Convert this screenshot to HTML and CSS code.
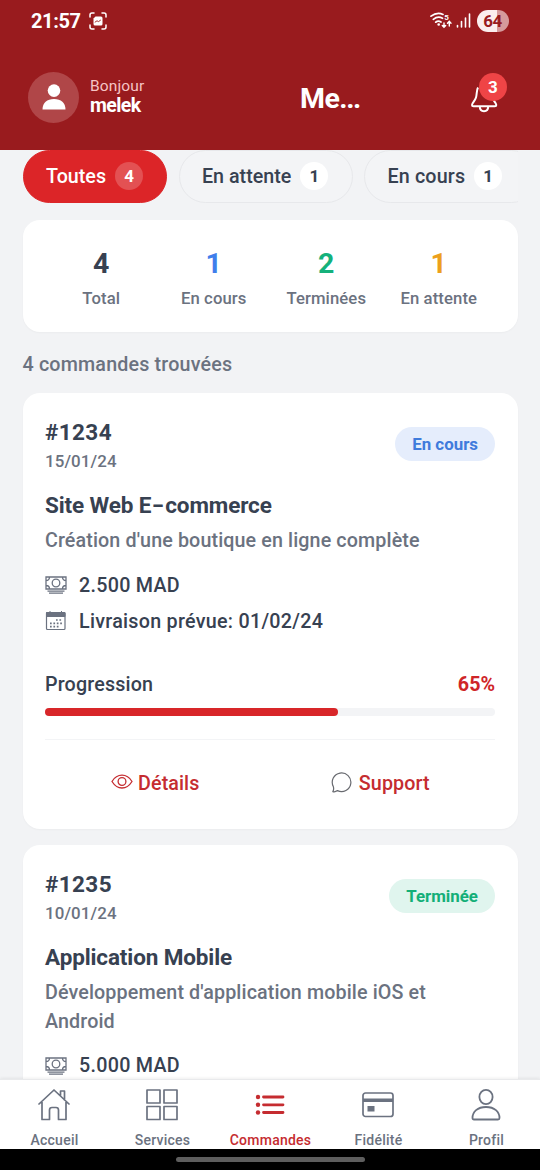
FILE: index.html
```html
<!DOCTYPE html>
<html lang="fr">
<head>
<meta charset="utf-8">
<title>Mes commandes</title>
<link rel="stylesheet" href="styles.css">
</head>
<body>
<svg class="defs" width="0" height="0">
  <symbol id="cash" viewBox="0 0 22 18">
    <path d="M1 1h20v12H1zM4.5 1c0 2-1.4 3.5-3.5 3.5M17.500 1c0 2 1.400 3.500 3.500 3.500M1 9.500c2.100 0 3.500 1.500 3.500 3.500M21 9.500c-2.100 0-3.500 1.500-3.500 3.500M2.500 15.200h17M4 17.200h14" fill="none" stroke="currentColor" stroke-width="1.300"/>
    <circle cx="11" cy="7" r="3.800" fill="none" stroke="currentColor" stroke-width="1.300"/>
  </symbol>
</svg>
<div class="screen">
  <header class="header">
    <div class="status">
      <span class="clock">21:57</span>
      <svg class="capture" width="18" height="18" viewBox="0 0 18 18"><path d="M1 5V3a2 2 0 0 1 2-2h2M13 1h2a2 2 0 0 1 2 2v2M17 13v2a2 2 0 0 1-2 2h-2M5 17H3a2 2 0 0 1-2-2v-2" fill="none" stroke="#fff" stroke-width="1.500" stroke-linecap="round"/><path d="M6.500 4.500H12A1.500 1.500 0 0 1 13.500 6v6a1.500 1.500 0 0 1-1.500 1.500H6A1.500 1.500 0 0 1 4.500 12V6.500z" fill="#fff"/><path d="M5.800 10.300 8 8.800 9.500 9.600 11.800 8" fill="none" stroke="#991b1e" stroke-width=".9"/></svg>
      <svg class="wifi" width="22" height="17" viewBox="0 0 22 17"><g fill="none" stroke="#fff" stroke-width="1.700" stroke-linecap="round"><path d="M1 4.200Q7 -.4 13 2.400M3.300 7.300Q8 3.700 12.500 6.300M5.700 10.200Q8.200 8.300 11 10"/><path d="M14 11v4M12.300 13.500 14 15.300l1.700-1.800M19.300 14V9.500M17.500 11.200l1.800-1.900 1.700 1.900" stroke-width="1.400"/></g><circle cx="8.700" cy="12.500" r="1.300" fill="#fff"/><text x="14.300" y="7.500" fill="#fff" class="band">5</text></svg>
      <svg class="signal" width="15" height="15" viewBox="0 0 15 15"><path d="M1.500 12.500v1.500M5.500 8.500V14M9.500 5v9M13.500 1v13" stroke="#fff" stroke-width="1.600" stroke-linecap="round"/></svg>
      <span class="battery">64</span>
    </div>
    <div class="bar">
      <div class="avatar"><svg width="24" height="26" viewBox="0 0 24 26"><circle cx="12" cy="6.600" r="6.300" fill="#fff"/><path d="M.5 25.500c0-6.500 4.500-10.500 11.500-10.500s11.500 4 11.500 10.500z" fill="#fff"/></svg></div>
      <div class="hello"><span class="greet">Bonjour</span><span class="user">melek</span></div>
      <h1 class="title">Me<span class="dots">...</span></h1>
      <div class="bell"><svg width="28" height="30" viewBox="0 0 28 30"><path d="M8 4.500C6.500 7 7 11 6 14.500 5 18 2 20 2 22q0 1.300 1.500 1.300h21.300q1.500 0 1.500-1.300c0-2-3-4-4-7.500M9.800 23.500c0 2.800 1.600 4.700 4.200 4.700s4.200-1.900 4.200-4.700" fill="none" stroke="#fff" stroke-width="2"/></svg><span class="badge">3</span></div>
    </div>
  </header>

  <main class="content">
    <div class="filters">
      <div class="chip active"><span>Toutes</span><b>4</b></div>
      <div class="chip pending"><span>En attente</span><b>1</b></div>
      <div class="chip running"><span>En cours</span><b>1</b></div>
    </div>
    <section class="stats">
      <div class="stat"><strong>4</strong><span>Total</span></div>
      <div class="stat blue"><strong>1</strong><span>En cours</span></div>
      <div class="stat green"><strong>2</strong><span>Terminées</span></div>
      <div class="stat amber"><strong>1</strong><span>En attente</span></div>
    </section>
    <p class="found">4 commandes trouvées</p>

    <article class="card">
      <div class="top"><div><h2 class="num">#1234</h2><div class="date">15/01/24</div></div><span class="tag tag-blue">En cours</span></div>
      <h3 class="name">Site Web E<span class="dash">-</span>commerce</h3>
      <p class="desc">Création d'une boutique en ligne complète</p>
      <div class="row"><svg width="22" height="18"><use href="#cash"/></svg><span>2.500 MAD</span></div>
      <div class="row second"><svg width="22" height="20" viewBox="0 0 22 20"><rect x="1.500" y="1.500" width="18.500" height="17" rx="1" fill="none" stroke="currentColor" stroke-width="1.200"/><path d="M1.500 1.500h18.500v4H1.500zM5 0v2M16.500 0v2" fill="currentColor" stroke="currentColor"/><path d="M11 9h6.500M5 12.300h12.500M5 15.600h9.500" stroke="currentColor" stroke-width="1.700" stroke-dasharray="1.700 1.700"/></svg><span>Livraison prévue: 01/02/24</span></div>
      <div class="progress"><span>Progression</span><b>65%</b></div>
      <div class="track"><div class="fill" style="width:65%"></div></div>
      <div class="actions">
        <div class="action"><svg width="22" height="18" viewBox="0 0 22 18"><path d="M1 7.500C3.500 3.500 7 1.200 11 1.200s7.500 2.300 10 6.300C18.500 11.500 15 14 11 14S3.500 11.500 1 7.500z" fill="none" stroke="#c52c30" stroke-width="1.300"/><circle cx="11" cy="7.500" r="3.900" fill="none" stroke="#c52c30" stroke-width="1.300"/></svg><span>Détails</span></div>
        <div class="action support"><svg width="22" height="22" viewBox="0 0 22 22"><path d="M2.300 14.500A9.300 9.300 0 1 1 6.500 18.600C4.800 19.800 3 20 1.800 19.600 2.800 18.200 2.900 16.500 2.300 14.500z" fill="none" stroke="#686a70" stroke-width="1.200" stroke-linejoin="round"/></svg><span>Support</span></div>
      </div>
    </article>

    <article class="card">
      <div class="top"><div><h2 class="num">#1235</h2><div class="date">10/01/24</div></div><span class="tag tag-green">Terminée</span></div>
      <h3 class="name">Application Mobile</h3>
      <p class="desc">Développement d'application mobile iOS et Android</p>
      <div class="row"><svg width="22" height="18"><use href="#cash"/></svg><span>5.000 MAD</span></div>
    </article>
  </main>

  <nav class="tabs">
    <div class="tab"><svg width="32" height="34" viewBox="0 0 32 34"><path d="M1 16 16 2l15 14M4 14v17.500h7.500V22q0-2.500 2.500-2.500h4q2.500 0 2.500 2.500v9.500H28V14M22.500 7.500V3h4v9" fill="none" stroke="currentColor" stroke-width="1.700" stroke-linejoin="round" stroke-linecap="round"/></svg><span>Accueil</span></div>
    <div class="tab"><svg width="32" height="34" viewBox="0 0 32 34"><path d="M1 2h13v13H1zM18 2h13v13H18zM1 18.500h13v13H1zM18 18.500h13v13H18z" fill="none" stroke="currentColor" stroke-width="1.700" stroke-linejoin="round"/></svg><span>Services</span></div>
    <div class="tab current"><svg width="32" height="34" viewBox="0 0 32 34"><path d="M9.500 9H29M9.500 16.800H29M9.500 24.500H29" stroke="currentColor" stroke-width="2.800" stroke-linecap="round"/><g fill="currentColor"><circle cx="4" cy="9" r="2.200"/><circle cx="4" cy="16.800" r="2.200"/><circle cx="4" cy="24.500" r="2.200"/></g></svg><span>Commandes</span></div>
    <div class="tab"><svg width="32" height="34" viewBox="0 0 32 34"><rect x="1" y="5" width="30" height="23.500" rx="2.500" fill="none" stroke="currentColor" stroke-width="1.700"/><path d="M1 10.500h30v3.500H1zM5.500 18h7v5.500h-7z" fill="currentColor"/></svg><span>Fidélité</span></div>
    <div class="tab"><svg width="32" height="34" viewBox="0 0 32 34"><ellipse cx="16" cy="9" rx="6.600" ry="7.200" fill="none" stroke="currentColor" stroke-width="1.800"/><path d="M2.500 30c0-6.300 5-11 13.500-11s13.500 4.700 13.500 11q0 1.500-1.500 1.500H4Q2.500 31.500 2.500 30z" fill="none" stroke="currentColor" stroke-width="1.800"/></svg><span>Profil</span></div>
  </nav>
  <div class="gesture"><div class="handle"></div></div>
</div>
</body>
</html>
```

FILE: styles.css
```css
* { box-sizing: border-box; }
body, h1, h2, h3, p { margin: 0; }
body { font-family: Roboto, sans-serif; font-weight: 500; color: #374151; background: #f2f3f5; }
svg { display: block; flex: none; }
.defs { position: absolute; }
.screen { width: 540px; height: 1170px; display: flex; flex-direction: column; overflow: hidden; }

.header { height: 149.500px; flex: none; background: #991b1e; color: #fff; }
.status { height: 42px; display: flex; align-items: center; padding: 0 31.500px 1px 31px; }
.clock { font-size: 20px; font-weight: 700; width: 58px; letter-spacing: -.4px; }
.wifi { margin-left: auto; }
.band { font-size: 8px; font-weight: 700; }
.signal { margin-left: 4px; }
.battery { width: 32px; height: 22px; margin-left: 6px; border-radius: 11px; background: linear-gradient(90deg, #fbeeee 64%, #d69a9c 64%); color: #991b1e; font-size: 17px; font-weight: 700; line-height: 22px; text-align: center; letter-spacing: -.5px; }
.bar { height: 107px; display: flex; align-items: center; padding: 3px 28px 0; }
.avatar { width: 51px; height: 51px; border-radius: 50%; background: #b04648; display: flex; align-items: center; justify-content: center; }
.hello { display: flex; flex-direction: column; margin-left: 11px; width: 210px; margin-top: -3px; }
.greet { font-size: 15.500px; line-height: 20px; font-weight: 400; color: #f6c4c5; letter-spacing: .15px; }
.user { font-size: 19.500px; line-height: 20px; font-weight: 700; letter-spacing: -.6px; }
.title { font-size: 28.500px; line-height: 34px; font-weight: 700; margin-top: 4px; letter-spacing: -.5px; }
.dots { letter-spacing: -1.400px; }
.bell { position: relative; margin-left: auto; margin-right: 14px; margin-top: 1px; }
.badge { position: absolute; left: 9px; top: -10px; width: 28px; height: 28px; border-radius: 50%; background: #ef4446; font-size: 17px; font-weight: 700; line-height: 28px; text-align: center; }

.content { flex: 1; min-height: 0; overflow: hidden; padding: 0 22.500px; }
.filters { display: flex; gap: 11.500px; height: 53.500px; overflow: hidden; }
.chip { flex: none; height: 53px; border: 1.500px solid #e7e8eb; border-radius: 27px; padding: 0 22px 0 22.500px; display: flex; align-items: center; gap: 9px; font-size: 19.700px; background: #f3f4f6; white-space: nowrap; }
.chip span { padding-top: 1px; }
.chip b { flex: none; width: 28px; height: 28px; border-radius: 50%; background: #fff; font-size: 17px; line-height: 28px; text-align: center; font-weight: 700; letter-spacing: 0; }
.active { width: 144.500px; background: #dc2528; border-color: #dc2528; color: #fff; }
.active b { background: #e35153; }
.pending { width: 174px; }
.running { width: 174px; letter-spacing: .15px; }
.stats { height: 112px; margin-top: 17px; border-radius: 17px; background: #fff; box-shadow: 0 1px 2px #00000008; padding: 27px 22.500px 0; display: grid; grid-template-columns: repeat(4, 1fr); text-align: center; }
.stat strong { display: block; font-size: 28.500px; line-height: 34px; font-weight: 700; }
.stat span { display: block; margin-top: 6px; font-size: 16.700px; line-height: 24px; color: #6b7280; white-space: nowrap; letter-spacing: .1px; }
.blue strong { color: #3f7eeb; }
.green strong { color: #15b17b; }
.amber strong { color: #eda01c; }
.found { margin: 18.500px 0 14.500px; font-size: 19.700px; line-height: 28px; color: #6b7280; letter-spacing: .17px; }

.card { height: 436px; margin-bottom: 16px; padding: 23px 22.500px 0; background: #fff; border-radius: 17px; box-shadow: 0 1px 2px #00000008; }
.top { display: flex; justify-content: space-between; }
.num { font-size: 22.500px; line-height: 32px; font-weight: 700; letter-spacing: .4px; margin-top: -.5px; }
.date { font-size: 16.900px; line-height: 26px; color: #6b7280; margin-top: .5px; letter-spacing: .1px; }
.tag { margin-top: 11px; height: 34px; border-radius: 17px; padding: 0 17px; font-size: 16.900px; line-height: 34px; font-weight: 700; }
.tag-blue { background: #e5edfc; color: #3f7bdc; }
.tag-green { background: #e0f5ee; color: #13af78; }
.name { margin-top: 14.500px; font-size: 22.500px; line-height: 32px; font-weight: 700; letter-spacing: -.13px; }
.dash { display: inline-block; width: 14px; text-align: center; transform: scaleX(1.500); }
.desc { margin-top: 6.500px; max-width: 430px; font-size: 19.700px; line-height: 28.500px; color: #6b7280; letter-spacing: .12px; }
.row { display: flex; align-items: center; gap: 12px; height: 28px; margin-top: 15.500px; font-size: 19.700px; letter-spacing: .28px; }
.row svg { color: #6b7280; }
.second { margin-top: 8px; }
.progress { display: flex; justify-content: space-between; margin-top: 35.500px; font-size: 19.700px; line-height: 28px; letter-spacing: .17px; }
.progress b { font-weight: 700; color: #cf2528; letter-spacing: 0; }
.track { height: 8.500px; margin-top: 9px; border-radius: 5px; background: #f3f4f6; }
.fill { height: 100%; border-radius: 5px; background: #d82629; }
.actions { display: grid; grid-template-columns: 1fr 1fr; height: 88px; margin-top: 22.500px; border-top: 1.500px solid #f3f4f6; }
.action { display: flex; justify-content: center; align-items: center; gap: 5.500px; font-size: 19.700px; color: #c52c30; padding-right: 5px; letter-spacing: .1px; }
.support { padding-right: 4px; }

.tabs { position: relative; height: 70px; flex: none; background: #fff; border-top: 1px solid #e9eaec; display: grid; grid-template-columns: repeat(5, 1fr); box-shadow: 0 -1px 3px #00000010; color: #6b7280; }
.tab { display: flex; flex-direction: column; align-items: center; padding-top: 8px; }
.tab span { margin-top: 7px; font-size: 14px; line-height: 22px; font-weight: 500; letter-spacing: .25px; padding-left: 1px; }
.current { color: #c52c30; }
.gesture { position: relative; height: 21px; flex: none; background: #000; display: flex; justify-content: center; padding-top: 8px; }
.handle { width: 189px; height: 5px; border-radius: 3px; background: #5e5e5e; }
```
